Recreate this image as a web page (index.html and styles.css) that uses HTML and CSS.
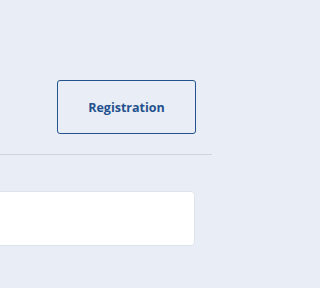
FILE: index.html
```html
<!DOCTYPE html>
<html>
<head>
<meta charset="utf-8">
<link rel="stylesheet" href="styles.css">
</head>
<body>
<div class="page">
  <div class="header">
    <button class="btn-register">Registration</button>
  </div>
  <div class="content">
    <div class="card"></div>
  </div>
</div>
</body>
</html>
```
FILE: styles.css
```css
html, body {
  margin: 0;
  padding: 0;
  background: #e9edf5;
  font-family: "Open Sans", "Liberation Sans", sans-serif;
}
.page {
  width: 212px;
}
.header {
  display: flex;
  justify-content: flex-end;
  padding: 80px 16px 20px 0;
  border-bottom: 1px solid #cfd5df;
}
.btn-register {
  width: 139px;
  height: 54px;
  box-sizing: border-box;
  background: transparent;
  border: 1px solid #24528f;
  border-radius: 3px;
  color: #24528f;
  font-family: "Open Sans", "Liberation Sans", sans-serif;
  font-weight: 700;
  font-size: 12.5px;
  padding: 0;
}
.content {
  padding-top: 36px;
}
.card {
  margin-left: -10px;
  width: 205px;
  height: 55px;
  box-sizing: border-box;
  background: #ffffff;
  border: 1px solid #dfe4ec;
  border-radius: 4px;
}
```
